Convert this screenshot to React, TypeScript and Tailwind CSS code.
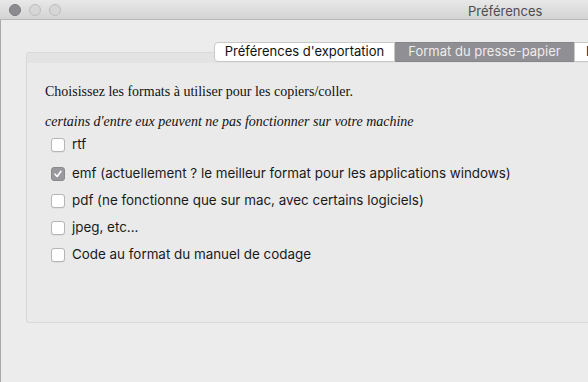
import React from "react";

const SANS = 'Inter, "Liberation Sans", Arial, sans-serif';
const SERIF = '"Liberation Serif", "Times New Roman", serif';

const Box = ({ checked }: { checked?: boolean }) =>
  checked ? (
    <div className="w-[14px] h-[14px] rounded-[3px] bg-[#9a9a9e] border border-[#8a8a8e] flex items-center justify-center shrink-0">
      <svg width="10" height="10" viewBox="0 0 10 10">
        <path d="M2 5.2 L4.2 7.5 L8 2.3" fill="none" stroke="#fff" strokeWidth="1.6" strokeLinecap="round" strokeLinejoin="round" />
      </svg>
    </div>
  ) : (
    <div className="w-[14px] h-[14px] rounded-[3px] bg-white border border-[#b5b5b5] shrink-0 shadow-[0_0.5px_0.5px_rgba(0,0,0,0.1)]" />
  );

const Row = ({ label, checked, extra }: { label: string; checked?: boolean; extra?: boolean }) => (
  <div className={`flex items-center gap-[7px] h-[20px] ${extra ? "mt-[2px]" : ""}`}>
    <Box checked={checked} />
    <span className="text-[13.4px] text-[#1a1a1a] leading-none" style={{ fontFamily: SANS }}>
      {label}
    </span>
  </div>
);

export default function App() {
  return (
    <div className="w-[588px] h-[382px] bg-[#ececec] overflow-hidden relative" style={{ fontFamily: SANS }}>
      {/* title bar */}
      <div className="h-[20px] bg-gradient-to-b from-[#e8e8e8] to-[#d3d3d3] border-b border-[#b8b8b8] flex items-center relative">
        <div className="flex items-center gap-[8px] pl-[9px]">
          <div className="w-[12px] h-[12px] rounded-full bg-[#8c8b90] border border-[#7a797e]" />
          <div className="w-[12px] h-[12px] rounded-full bg-[#d6d6d6] border border-[#bdbdbd]" />
          <div className="w-[12px] h-[12px] rounded-full bg-[#d6d6d6] border border-[#bdbdbd]" />
        </div>
        <div className="absolute left-[468px] top-[2px] text-[13px] text-[#4d4d4d]">Préférences</div>
      </div>
      <div className="flex h-[362px]">
        <div className="w-[1px] bg-[#a9a9a9]" />
        <div className="flex-1 pl-[25px] pt-[32px]">
          <div className="relative h-[271px] border border-[#d9d9d9] rounded-tl-[3px] rounded-bl-[3px] border-r-0 bg-[#eaeaea]">
            <div className="h-[10px] bg-[#e3e3e3]" />
            {/* tabs */}
            <div className="absolute top-[-11px] left-[187px] flex h-[20px] text-[13px]">
              <div className="w-[181px] bg-white border border-[#c8c8c8] rounded-l-[4px] flex items-center justify-center text-[#111]">
                Préférences d'exportation
              </div>
              <div className="w-[179px] bg-[#8f8f94] border-y border-[#86868a] flex items-center justify-center text-[#ececec]">
                Format du presse-papier
              </div>
              <div className="w-[60px] bg-white border border-[#c8c8c8] flex items-center pl-[11px] text-[#111]">
                Import
              </div>
            </div>
            <div className="pl-[18px] pt-[19px]">
              <div className="text-[14px] text-[#111] leading-[20px]" style={{ fontFamily: SERIF }}>
                Choisissez les formats à utiliser pour les copiers/coller.
              </div>
              <div className="mt-[10px] text-[14px] italic text-[#111] leading-[20px]" style={{ fontFamily: SERIF }}>
                certains d'entre eux peuvent ne pas fonctionner sur votre machine
              </div>
              <div className="pl-[6px] mt-[3px] flex flex-col gap-[7px]">
                <Row label="rtf" />
                <Row label="emf (actuellement ? le meilleur format pour les applications windows)" checked extra />
                <Row label="pdf (ne fonctionne que sur mac, avec certains logiciels)" />
                <Row label="jpeg, etc..." />
                <Row label="Code au format du manuel de codage" />
              </div>
            </div>
          </div>
        </div>
      </div>
    </div>
  );
}
